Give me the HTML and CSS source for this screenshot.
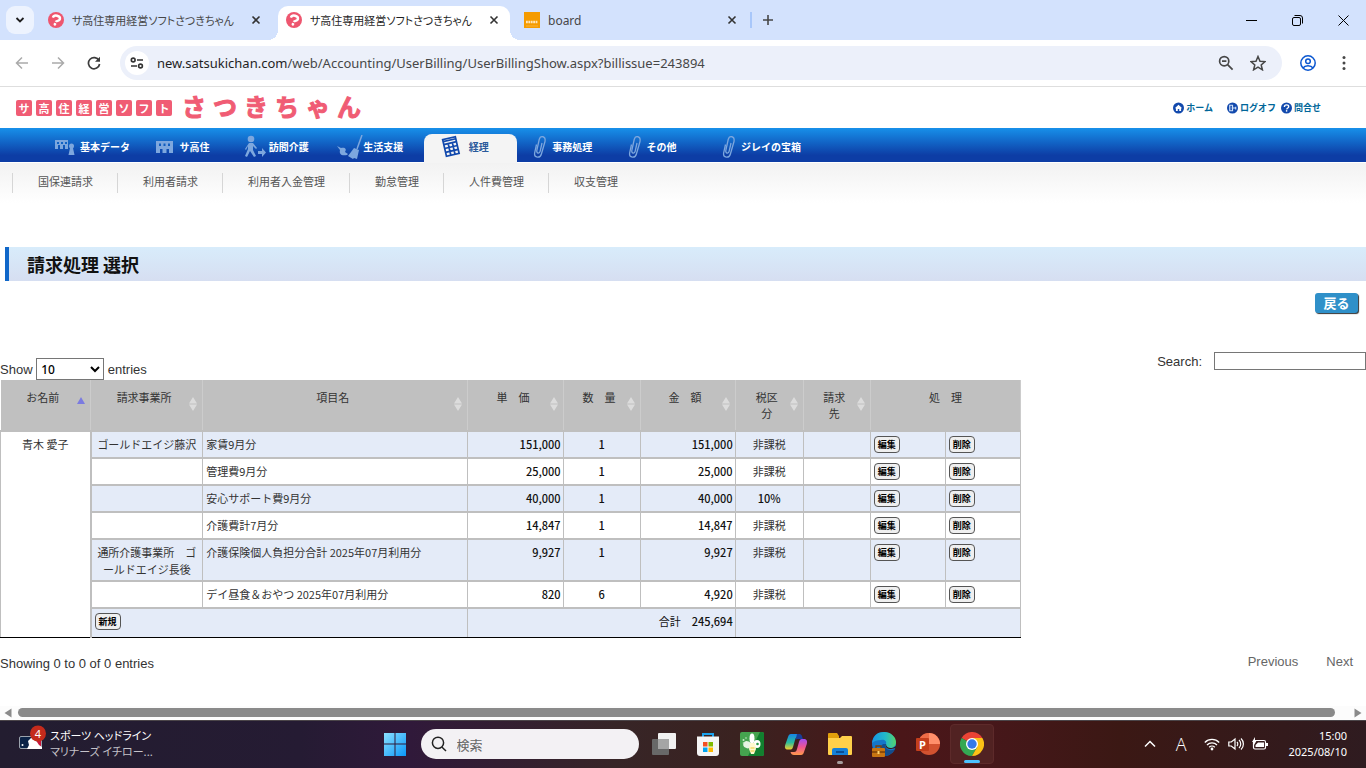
FILE: index.html
```html
<!DOCTYPE html>
<html lang="ja">
<head>
    <meta charset="UTF-8">
    <title>サ高住専用経営ソフトさつきちゃん</title>
    <link rel="stylesheet" href="styles.css">
</head>
<body>
<svg class="defs" aria-hidden="true">
    <symbol id="favicon" viewBox="0 0 16 16"><circle cx="8" cy="8" r="8" fill="#ee566f"/><g transform="rotate(14 8 8)"><path d="M4.400 6.400C4.600 4.400 6 3.600 8 3.600s3.600 1 3.600 2.700c0 2-3 2-3.400 3.600" fill="none" stroke="#fff" stroke-width="2.400"/><circle cx="8" cy="12.400" r="1.400" fill="#fff"/></g></symbol>
    <symbol id="close" viewBox="0 0 10 10"><path d="M1.500 1.500l7 7M8.500 1.500l-7 7" fill="none" stroke="currentColor" stroke-width="1.600"/></symbol>
    <symbol id="clip" viewBox="0 0 14 24"><path d="M3.500 9.500L1.600 18c-.6 5 5.600 5.600 6.800 1L12 6.500c1-5.500-4.600-6.500-5.800-2L3.800 15.500c-.4 3.200 2.800 3.400 3.400.6L9 8" fill="none" stroke="currentColor" stroke-width="1.300"/></symbol>
    <symbol id="sort" viewBox="0 0 8 14"><path d="M4 0l4 6.500H0zM4 14l4-6.500H0z" fill="#dcdcdc"/></symbol>
</svg>

<!-- タブ -->
<div class="tabstrip">
    <button class="tab-search" aria-label="タブを検索"><svg width="10" height="10" viewBox="0 0 10 10"><path d="M1.500 3L5 6.500 8.500 3" fill="none" stroke="#1f1f1f" stroke-width="1.800"/></svg></button>
    <div class="tab">
        <svg width="16" height="16"><use href="#favicon"/></svg>
        <span class="tab-title">サ高住専用経営ソフトさつきちゃん</span>
        <button class="tab-close" aria-label="閉じる"><svg width="10" height="10"><use href="#close"/></svg></button>
    </div>
    <div class="tab active">
        <svg width="16" height="16"><use href="#favicon"/></svg>
        <span class="tab-title">サ高住専用経営ソフトさつきちゃん</span>
        <button class="tab-close" aria-label="閉じる"><svg width="10" height="10"><use href="#close"/></svg></button>
    </div>
    <div class="tab">
        <svg width="16" height="16" viewBox="0 0 16 16"><path d="M0 0h16v16H0z" fill="#f59b00"/><path d="M2 10h12" stroke="#ffe6bd" stroke-width="2.400" stroke-dasharray="1.800 .6"/><path d="M2 14h12" stroke="#fbc76a" stroke-width=".6"/></svg>
        <span class="tab-title latin">board</span>
        <button class="tab-close" aria-label="閉じる"><svg width="10" height="10"><use href="#close"/></svg></button>
    </div>
    <button class="tab-new" aria-label="新しいタブ"><svg width="12" height="12" viewBox="0 0 12 12"><path d="M6 1v10M1 6h10" stroke="#474747" stroke-width="1.600"/></svg></button>
    <div class="win">
        <button aria-label="最小化"><svg width="11" height="11" viewBox="0 0 11 11"><path d="M0 5.500h11" stroke="#000"/></svg></button>
        <button aria-label="元に戻す"><svg width="11" height="11" viewBox="0 0 11 11"><rect x=".5" y="2.500" width="8" height="8" rx="1.500" fill="none" stroke="#000"/><path d="M2.500.5H8a2.500 2.500 0 0 1 2.500 2.500v5.500" fill="none" stroke="#000"/></svg></button>
        <button aria-label="閉じる"><svg width="11" height="11" viewBox="0 0 11 11"><path d="M.5.5l10 10M10.500.5l-10 10" stroke="#000"/></svg></button>
    </div>
</div>

<!-- アドレスバー -->
<div class="toolbar">
    <button aria-label="戻る"><svg width="14" height="14" viewBox="0 0 14 14"><path d="M13 7H2M7 1.500L1.500 7 7 12.500" fill="none" stroke="#aaa" stroke-width="1.500"/></svg></button>
    <button aria-label="進む"><svg width="14" height="14" viewBox="0 0 14 14"><path d="M1 7h11M7 1.500L12.500 7 7 12.500" fill="none" stroke="#aaa" stroke-width="1.500"/></svg></button>
    <button aria-label="再読み込み"><svg width="14" height="14" viewBox="0 0 14 14"><path d="M12 4.500A5.600 5.600 0 1 0 12.600 8" fill="none" stroke="#3c3c3c" stroke-width="1.700"/><path d="M13 .8v5H8z" fill="#3c3c3c"/></svg></button>
    <div class="omnibox">
        <span class="site-info"><svg width="14" height="12" viewBox="0 0 14 12"><g fill="none" stroke="#333" stroke-width="1.600"><circle cx="3.200" cy="3" r="1.900"/><path d="M7 3h6M1 9h6"/><circle cx="10.500" cy="9" r="1.900"/></g></svg></span>
        <span class="url">new.satsukichan.com<span>/web/Accounting/UserBilling/UserBillingShow.aspx?billissue=243894</span></span>
        <svg width="16" height="16" viewBox="0 0 16 16"><g fill="none" stroke="#474747" stroke-width="1.700"><circle cx="6.200" cy="6.200" r="4.600"/><path d="M9.600 9.600l5 5M4 6.200h4.400"/></g></svg>
        <svg width="16" height="16" viewBox="0 0 16 16"><path d="M8 1.500l2 4.700 5 .4-3.800 3.300 1.200 4.900L8 12.200l-4.400 2.600 1.200-4.900L1 6.600l5-.4z" fill="none" stroke="#474747" stroke-width="1.500"/></svg>
    </div>
    <button aria-label="プロフィール"><svg width="16" height="16" viewBox="0 0 16 16"><g fill="none" stroke="#0b57d0" stroke-width="1.500"><circle cx="8" cy="8" r="7.200"/><circle cx="8" cy="6.300" r="2.300"/><path d="M3 13c2-3 8-3 10 0"/></g></svg></button>
    <button aria-label="メニュー"><svg width="4" height="14" viewBox="0 0 4 14"><g fill="#474747"><circle cx="2" cy="1.600" r="1.500"/><circle cx="2" cy="7" r="1.500"/><circle cx="2" cy="12.400" r="1.500"/></g></svg></button>
</div>

<div class="page">
    <div class="header">
        <div class="logo">
            <div class="logo-sub"><span>サ</span><span>高</span><span>住</span><span>経</span><span>営</span><span>ソ</span><span>フ</span><span>ト</span></div>
            <div class="logo-name"><span>さ</span><span>つ</span><span>き</span><span>ち</span><span>ゃ</span><span>ん</span></div>
        </div>
        <div class="links">
            <a class="home" href="#"><svg width="11" height="12" viewBox="0 0 12 12"><circle cx="6" cy="6" r="6" fill="#1249ad"/><path d="M6 2.500L2 6.200h1.200v3h2V7.200h1.600v2h2v-3H10z" fill="#fff"/></svg>ホーム</a>
            <a href="#"><svg width="11" height="12" viewBox="0 0 12 12"><circle cx="6" cy="6" r="6" fill="#1249ad"/><path d="M3 3h3v6H3zM5 6h5M9.500 4.500v3" fill="none" stroke="#cfe0f7" stroke-width="1.300"/></svg>ログオフ</a>
            <a href="#"><svg width="11" height="12" viewBox="0 0 12 12"><circle cx="6" cy="6" r="6" fill="#1249ad"/><path d="M3.700 4.800C3.700 3.400 4.700 2.600 6 2.600s2.400.8 2.400 1.900c0 1.500-2 1.500-2.200 3" fill="none" stroke="#fff" stroke-width="1.500"/><circle cx="6.100" cy="9.200" r=".9" fill="#fff"/></svg>問合せ</a>
        </div>
    </div>

    <!-- メインメニュー -->
    <div class="nav">
        <a href="#"><svg class="icon" viewBox="0 0 26 24"><path d="M1 5h13v9h-3v-4H9v4H6v-4H4v4H1zM3 7v2h2V7zM7 7v2h2V7zM11 7v2h2V7z" fill-rule="evenodd"/><circle cx="17.500" cy="11" r="2.500"/><path d="M16 13h3l1.500 7h-6z"/></svg>基本データ</a>
        <a class="wide" href="#"><svg class="icon" viewBox="0 0 26 24"><path d="M3 6h17v12h-4v-4h-2.500v4h-4v-4H7v4H3zM6 8.500v2.500h2V8.500zM10.500 8.500v2.500h2V8.500zM15 8.500v2.500h2V8.500z" fill-rule="evenodd"/></svg>サ高住</a>
        <a href="#"><svg class="icon" viewBox="0 0 26 24"><circle cx="8" cy="4" r="3.300"/><path d="M6 8h4l4 5-1 1-3-3v4l3 6-2 1-4-6-3 6-2-1 3-7v-3l-2 4-1-1zM15 16h4v-3l4 4.500-4 4.500v-3h-4z"/></svg>訪問介護</a>
        <a href="#"><svg class="icon" viewBox="0 0 26 24"><path d="M25 0l-5 14" fill="none" stroke="currentColor" stroke-width="1.500"/><path d="M17 13l5 2-2 9-3-1-1 1-5-3zM0 11l4 2c4-1 6 1 4 4l3 2-1 1c-6 1-8-1-7-5z"/></svg>生活支援</a>
        <a class="on" href="#"><svg class="icon" viewBox="0 0 26 24"><g transform="rotate(-13 13 12)" fill="none" stroke="#1249ad" stroke-width="1.700"><rect x="6.500" y="3" width="13" height="17"/><path d="M6.500 5H19.500M6.500 8H19.500M6.500 12H19.500M6.500 16H19.500M11 8V20M15.300 8V20"/></g></svg>経理</a>
        <a href="#"><svg class="icon" viewBox="0 0 26 24"><use href="#clip" x="7" width="14" height="24"/></svg>事務処理</a>
        <a href="#"><svg class="icon" viewBox="0 0 26 24"><use href="#clip" x="7" width="14" height="24"/></svg>その他</a>
        <a href="#"><svg class="icon" viewBox="0 0 26 24"><use href="#clip" x="7" width="14" height="24"/></svg>ジレイの宝箱</a>
    </div>
    <div class="subnav">
        <a href="#">国保連請求</a>
        <a href="#">利用者請求</a>
        <a href="#">利用者入金管理</a>
        <a href="#">勤怠管理</a>
        <a href="#">人件費管理</a>
        <a href="#">収支管理</a>
    </div>

    <h1>請求処理 選択</h1>
    <div class="actions"><button class="back">戻る</button></div>

    <div class="table-top">
        <label class="length">Show
            <select><option>10</option><option>25</option><option>50</option></select>
            entries</label>
        <label class="filter">Search: <input type="text"></label>
    </div>

    <table>
        <colgroup><col class="c-name"><col class="c-office"><col class="c-item"><col class="c-price"><col class="c-qty"><col class="c-price"><col class="c-tax"><col class="c-dest"><col class="c-op"><col class="c-op"></colgroup>
        <thead>
        <tr>
            <th><div class="th"><span>お名前</span><svg viewBox="0 0 8 14"><path d="M4 0l4 7H0z" fill="#7b7be0"/></svg></div></th>
            <th><div class="th"><span>請求事業所</span><svg><use href="#sort"/></svg></div></th>
            <th><div class="th"><span>項目名</span><svg><use href="#sort"/></svg></div></th>
            <th><div class="th"><span>単　価</span><svg><use href="#sort"/></svg></div></th>
            <th><div class="th"><span>数　量</span><svg><use href="#sort"/></svg></div></th>
            <th><div class="th"><span>金　額</span><svg><use href="#sort"/></svg></div></th>
            <th><div class="th"><span>税区<br>分</span><svg><use href="#sort"/></svg></div></th>
            <th><div class="th"><span>請求<br>先</span><svg><use href="#sort"/></svg></div></th>
            <th colspan="2">処　理</th>
        </tr>
        </thead>
        <tbody>
        <tr>
            <td class="name" rowspan="7">青木 愛子</td>
            <td>ゴールドエイジ藤沢</td><td class="item">家賃9月分</td><td class="num">151,000</td><td class="qty">1</td><td class="num">151,000</td><td>非課税</td><td></td>
            <td class="op"><button>編集</button></td><td class="op"><button>削除</button></td>
        </tr>
        <tr>
            <td></td><td class="item">管理費9月分</td><td class="num">25,000</td><td class="qty">1</td><td class="num">25,000</td><td>非課税</td><td></td>
            <td class="op"><button>編集</button></td><td class="op"><button>削除</button></td>
        </tr>
        <tr>
            <td></td><td class="item">安心サポート費9月分</td><td class="num">40,000</td><td class="qty">1</td><td class="num">40,000</td><td class="qty">10%</td><td></td>
            <td class="op"><button>編集</button></td><td class="op"><button>削除</button></td>
        </tr>
        <tr>
            <td></td><td class="item">介護費計7月分</td><td class="num">14,847</td><td class="qty">1</td><td class="num">14,847</td><td>非課税</td><td></td>
            <td class="op"><button>編集</button></td><td class="op"><button>削除</button></td>
        </tr>
        <tr>
            <td>通所介護事業所　ゴールドエイジ長後</td><td class="item">介護保険個人負担分合計 2025年07月利用分</td><td class="num">9,927</td><td class="qty">1</td><td class="num">9,927</td><td>非課税</td><td></td>
            <td class="op"><button>編集</button></td><td class="op"><button>削除</button></td>
        </tr>
        <tr>
            <td></td><td class="item">デイ昼食＆おやつ 2025年07月利用分</td><td class="num">820</td><td class="qty">6</td><td class="num">4,920</td><td>非課税</td><td></td>
            <td class="op"><button>編集</button></td><td class="op"><button>削除</button></td>
        </tr>
        <tr class="total">
            <td class="op" colspan="2"><button>新規</button></td><td class="num" colspan="3"><span>合計</span>　245,694</td><td colspan="4"></td>
        </tr>
        </tbody>
    </table>

    <div class="table-bottom">
        <div class="info">Showing 0 to 0 of 0 entries</div>
        <div class="paginate"><a href="#">Previous</a><a href="#">Next</a></div>
    </div>
</div>

<div class="scrollbar">
    <svg width="8" height="10" viewBox="0 0 8 10"><path d="M7.500.5v9L.5 5z" fill="#8a8a8a"/></svg>
    <div class="thumb"></div>
    <svg width="8" height="10" viewBox="0 0 8 10"><path d="M.5.5v9l7-4.500z" fill="#8a8a8a"/></svg>
</div>

<!-- タスクバー -->
<div class="taskbar">
    <div class="widget">
        <svg width="28" height="30" viewBox="0 0 28 30"><rect x="1.500" y="12.500" width="22" height="12" rx="1.500" fill="#0b2347" stroke="#9ba3ad"/><path d="M19 13h4v11h-4z" fill="#c8173c"/><path d="M9 25l2-4-1-4 3-3 4 1 2 3 2 3 3 2v2z" fill="#fff"/><circle cx="4.500" cy="21" r="1" fill="#fff"/><circle cx="20" cy="9.500" r="8" fill="#c42b1c"/><text class="badge" x="20" y="13.500" text-anchor="middle">4</text></svg>
        <div class="news"><div>スポーツ ヘッドライン</div><div class="dim">マリナーズ イチロー...</div></div>
    </div>
    <div class="apps">
        <button aria-label="スタート"><svg width="24" height="24" viewBox="0 0 24 24"><defs><linearGradient id="win" x2="1" y2="1"><stop stop-color="#8be1ff"/><stop offset="1" stop-color="#0a96f8"/></linearGradient></defs><path d="M1 1h10.500v10.500H1zM12.500 1H23v10.500H12.500zM1 12.500h10.500V24H1zM12.500 12.500H23V24H12.500z" fill="url(#win)"/></svg></button>
        <label class="search"><svg width="16" height="16" viewBox="0 0 16 16"><g fill="none" stroke="#222" stroke-width="1.500"><circle cx="7" cy="6.800" r="5.600"/><path d="M10.800 11l4.200 4"/></g></svg><input type="text" placeholder="検索" aria-label="検索"></label>
        <button aria-label="タスクビュー"><svg width="24" height="24" viewBox="0 0 24 24"><rect x="0" y="7" width="17" height="16" rx="1" fill="#686868"/><rect x="6" y="1" width="18" height="16" rx="1" fill="#f1f1f1"/><path d="M6 7h11v10H6z" fill="#a5a5a5"/></svg></button>
        <button aria-label="ストア"><svg width="24" height="24" viewBox="0 0 24 24"><path d="M7 6V2h10v4" fill="none" stroke="#1ba3ee" stroke-width="2"/><path d="M1 4.500h22V21a3 3 0 0 1-3 3H4a3 3 0 0 1-3-3z" fill="#f5f5f5"/><path d="M7 10h4.500v4.500H7z" fill="#f25022"/><path d="M12.500 10H17v4.500h-4.500z" fill="#7fba00"/><path d="M7 15.500h4.500V20H7z" fill="#00a4ef"/><path d="M12.500 15.500H17V20h-4.500z" fill="#ffb900"/></svg></button>
        <button aria-label="メモ"><svg width="24" height="24" viewBox="0 0 24 24"><rect width="24" height="24" rx="2" fill="#45a34f"/><path d="M20 0h2a2 2 0 0 1 2 2v20a2 2 0 0 1-2 2H8z" fill="#12802f"/><ellipse cx="12" cy="6.500" rx="2.500" ry="5" fill="#fff"/><ellipse cx="7.500" cy="12.500" rx="4" ry="3.500" transform="rotate(25 7 12)" fill="#e6f4e4"/><ellipse cx="17" cy="12" rx="3.500" ry="4" fill="#fff"/><path d="M10 11h5l1 6-2 5h-3l-2-5z" fill="#fff8cf"/><path d="M10.500 16h4M10.500 19h4" stroke="#e8c832" stroke-width="1.200"/><circle cx="17.500" cy="12" r="1.300" fill="#2e9b45"/><g fill="#c8e8c8"><circle cx="3.500" cy="8" r="1"/><circle cx="6" cy="6" r=".8"/><circle cx="3.500" cy="11" r=".8"/></g></svg></button>
        <button aria-label="Copilot"><svg width="24" height="24" viewBox="0 0 24 24"><defs><linearGradient id="cpa" x2="0" y2="1"><stop stop-color="#1584e8"/><stop offset=".55" stop-color="#2bbd9b"/><stop offset="1" stop-color="#f5cf2c"/></linearGradient><linearGradient id="cpb" x2="0" y2="1"><stop stop-color="#a34cf0"/><stop offset=".5" stop-color="#ef5592"/><stop offset="1" stop-color="#ff9a4b"/></linearGradient></defs><path d="M7 2h7c2 0 3 1 3.500 3H14c-2 0-2.500 1-3 3l-2 7c-.5 2-1.500 2.500-3 2.500H4c-3 0-3.500-2-2.800-4.500L4 5c.5-2 1.500-3 3-3z" fill="url(#cpa)"/><path d="M13 2h2c2 0 3 1 3.500 4l.5 1h-5c-1 0-2 0-2.500 1z" fill="#173d9b"/><path d="M17 23h-7c-2 0-3-1-3.500-3H10c2 0 2.500-1 3-3l2-7c.5-2 1.500-3 3-3h2c3 0 3.500 2.500 2.800 5L20 20c-.5 2-1.500 3-3 3z" fill="url(#cpb)"/></svg></button>
        <button class="running" aria-label="エクスプローラー"><svg width="26" height="24" viewBox="0 0 26 24"><path d="M1 2a1 1 0 0 1 1-1h8l2 3v4H1z" fill="#e2a00c"/><path d="M1 6h12l2-2h9a1 1 0 0 1 1 1v17a1 1 0 0 1-1 1H2a1 1 0 0 1-1-1z" fill="#ffd04a"/><path d="M5 23v-5a2 2 0 0 1 2-2h12a2 2 0 0 1 2 2v5z" fill="#1580d8"/><path d="M9 20h8" stroke="#0a4d94" stroke-width="2"/></svg></button>
        <button aria-label="Edge"><svg width="26" height="26" viewBox="0 0 26 26"><defs><linearGradient id="edge" x2="1"><stop stop-color="#1795e5"/><stop offset=".55" stop-color="#22b9c9"/><stop offset="1" stop-color="#55d46b"/></linearGradient></defs><circle cx="13" cy="13" r="12" fill="#1476c9"/><path d="M1 12C2 4 7 1 13 1c7 0 12 5 12 10 0 4-3 6-6 6-4 0-5-2-4-4 1-3-2-5-5-4-4 0-7 1-9 3z" fill="url(#edge)"/><path d="M15 13c-2 5 4 8 9 5-2 4-6 7-10 7-5-2-6-9-2-12z" fill="#134c8c"/><path d="M15 13c-1 3 1 5 5 5l5-1v-2c-3 3-10 3-10-2z" fill="#361b1b"/><rect x="1" y="17" width="13" height="9" rx="1" fill="#c77412"/><path d="M5 17v-2h5v2M1 21h13" fill="none" stroke="#7b3f08" stroke-width="1.300"/><path d="M6.500 20h2v3h-2z" fill="#ffd36d"/></svg></button>
        <button aria-label="PowerPoint"><svg width="26" height="24" viewBox="0 0 26 24"><circle cx="14" cy="12" r="11" fill="#d35230"/><path d="M14 1a11 11 0 0 1 11 11H14z" fill="#ff8f6b"/><path d="M14 1v11H3A11 11 0 0 1 14 1z" fill="#ed6c47"/><rect x="1" y="6" width="13" height="13" rx="1" fill="#c43e1c"/><text class="ppt" x="7.500" y="16.500" text-anchor="middle">P</text></svg></button>
        <button class="current" aria-label="Chrome"><svg width="24" height="24" viewBox="0 0 24 24"><path d="M12 12L1.600 6A12 12 0 0 1 22.400 6z" fill="#ea4335"/><path d="M12 12L1.600 6A12 12 0 0 0 12 24l5.200-9z" fill="#34a853"/><path d="M12 12l5.200 3L12 24A12 12 0 0 0 22.400 6H12z" fill="#fbc116"/><circle cx="12" cy="12" r="6" fill="#fff"/><circle cx="12" cy="12" r="4.700" fill="#3478e8"/></svg></button>
    </div>
    <div class="tray">
        <svg width="12" height="8" viewBox="0 0 12 8"><path d="M1 6.500l5-5 5 5" fill="none" stroke="#fff" stroke-width="1.500"/></svg>
        <span class="ime">A</span>
        <div class="status">
            <svg width="16" height="14" viewBox="0 0 16 14"><g fill="none" stroke="#fff" stroke-width="1.300"><path d="M.8 5.500a10 10 0 0 1 14.400 0M3 8a7 7 0 0 1 10 0M5.200 10.300a4 4 0 0 1 5.600 0"/></g><circle cx="8" cy="12" r="1.400" fill="#fff"/></svg>
            <svg width="16" height="14" viewBox="0 0 16 14"><g fill="none" stroke="#fff" stroke-width="1.200"><path d="M.8 5v4h2.500L7 12V2L3.300 5zM9 5c1 1 1 3 0 4M11 3c2.300 2 2.300 6 0 8M13 1.500c3.200 3 3.200 8 0 11"/></g></svg>
            <svg width="16" height="14" viewBox="0 0 16 14"><rect x="1.500" y="3.500" width="12" height="8.500" rx="1.500" fill="none" stroke="#fff" stroke-width="1.200"/><path d="M6 5.500h6v4.500H3.500V8zM14 6h2v3h-2zM3 0L0 5h2v3l3-5H3z" fill="#fff"/></svg>
        </div>
        <div class="clock"><div>15:00</div><div>2025/08/10</div></div>
    </div>
</div>
</body>
</html>
```

FILE: styles.css
```css
* {
    margin: 0;
    padding: 0;
    box-sizing: border-box;
}

body {
    display: flex;
    flex-direction: column;
    height: 100vh;
    overflow: hidden;
    background: #fff;
    color: #333;
    font-family: "Noto Sans CJK JP", sans-serif;
    font-size: 11px;
}

a {
    color: inherit;
    text-decoration: none;
}

button {
    border: 0;
    background: none;
    font-family: inherit;
    cursor: pointer;
}

svg {
    flex: none;
    display: block;
}

.defs {
    position: absolute;
    width: 0;
    height: 0;
}

/* タブ */
.tabstrip {
    display: flex;
    flex: none;
    height: 40px;
    padding: 6px 0 0 6px;
    background: #d3e2fd;
}

.tab-search {
    display: grid;
    place-items: center;
    width: 28px;
    height: 28px;
    margin-right: 6px;
    border-radius: 9px;
    background: #edf3fe;
}

.tab {
    position: relative;
    display: flex;
    align-items: center;
    gap: 8px;
    width: 232px;
    height: 34px;
    margin-right: 6px;
    padding: 0 11px 6px 8px;
    color: #474747;
}

.tab.active {
    border-radius: 10px 10px 0 0;
    background: #fff;
    color: #1f1f1f;
}

.tab.active:before, .tab.active:after {
    content: "";
    position: absolute;
    bottom: 0;
    width: 10px;
    height: 10px;
    background: radial-gradient(circle at 0 0, #d3e2fd 10px, #fff 10px);
}

.tab.active:before {
    left: -10px;
}

.tab.active:after {
    right: -10px;
    background: radial-gradient(circle at 100% 0, #d3e2fd 10px, #fff 10px);
}

.tab-title {
    flex: 1;
    overflow: hidden;
    white-space: nowrap;
    font-size: 11px;
    font-feature-settings: "palt";
}

.latin {
    font-family: "Noto Sans", sans-serif;
    font-size: 12px;
}

.tab-close {
    color: #333;
}

.tab-new {
    display: flex;
    align-items: center;
    height: 16px;
    margin: 6px 0 0 -4px;
    padding-left: 10px;
    border-left: 2px solid #a8c7fa;
}

.win {
    display: flex;
    margin-left: auto;
}

.win button {
    display: grid;
    place-items: center;
    width: 46px;
    height: 28px;
}

/* アドレスバー */
.toolbar {
    display: flex;
    flex: none;
    align-items: center;
    height: 47px;
    padding: 0 4px;
    border-bottom: 1px solid #dedede;
}

.toolbar button {
    display: grid;
    place-items: center;
    width: 36px;
    height: 34px;
}

.omnibox {
    display: flex;
    flex: 1;
    align-items: center;
    gap: 16px;
    height: 34px;
    margin: 0 8px;
    padding: 0 16px 0 5px;
    border-radius: 17px;
    background: #ecf0fa;
}

.site-info {
    display: grid;
    place-items: center;
    width: 24px;
    height: 24px;
    border-radius: 12px;
    background: #fff;
}

.url {
    flex: 1;
    margin-left: -8px;
    color: #1f1f1f;
    font-family: "Noto Sans", sans-serif;
    font-size: 13px;
}

.url span {
    color: #474747;
}

/* ページ */
.page {
    flex: 1;
    overflow: hidden;
}

.header {
    display: flex;
    justify-content: space-between;
    height: 41px;
    padding: 0 45px 0 16px;
}

.logo {
    display: flex;
    align-items: center;
    gap: 10px;
    color: #f05c74;
    font-weight: bold;
}

.logo-sub {
    display: flex;
    gap: 4px;
}

.logo-sub span {
    width: 16px;
    height: 16px;
    border-radius: 2px;
    background: #f05c74;
    color: #fff;
    font-size: 11px;
    line-height: 16px;
    text-align: center;
}

.logo-name {
    display: flex;
    gap: 7px;
    margin-bottom: 4px;
    font-size: 24px;
    line-height: 32px;
    -webkit-text-stroke: 1px #f05c74;
}

.links {
    display: flex;
    align-items: center;
    gap: 5px;
    color: #006699;
    font-size: 9px;
    font-weight: bold;
}

.links a {
    display: flex;
    align-items: center;
    gap: 2px;
}

.links .home {
    margin-right: 9px;
}

/* メインメニュー */
.nav {
    display: grid;
    grid-template-columns: repeat(8, 1fr);
    height: 34px;
    padding: 0 calc(100% - 802px) 0 46px;
    background: linear-gradient(#1790ea, #0d3da5 80%);
    color: #fff;
    font-size: 10px;
    font-weight: bold;
}

.nav a {
    display: flex;
    align-items: center;
    height: 29px;
    margin: 6px 1px 0 0;
    padding: 0 0 4px 8px;
    white-space: nowrap;
}

.nav .wide {
    padding-left: 13px;
}

.icon {
    width: 26px;
    height: 24px;
    color: #7da7de;
    fill: currentColor;
}

.nav .on {
    gap: 5px;
    padding-left: 14px;
    border-radius: 8px 8px 0 0;
    background: #f4f4f4;
    color: #2b5a9c;
}

.subnav {
    display: flex;
    height: 40px;
    margin-top: 1px;
    padding: 10px 12px;
    background: linear-gradient(#f2f2f2, #fff);
    color: #555;
}

.subnav a {
    height: 20px;
    padding: 0 24px 0 25px;
    border-left: 1px solid #d6d6d6;
    line-height: 17px;
}

h1 {
    height: 34px;
    margin: 44px 0 0 5px;
    padding-left: 18px;
    border-left: 4px solid #1067c9;
    background: linear-gradient(#d8ecfb, #d6def1);
    color: #111;
    font-size: 18px;
    line-height: 34px;
}

.actions {
    padding: 12px 8px 0;
    text-align: right;
}

.back {
    display: block;
    width: 43px;
    height: 20px;
    margin-left: auto;
    border-radius: 3px;
    background: #2f90c9;
    box-shadow: 1px 1px 1px #333;
    color: #fff;
    font-size: 13px;
    font-weight: bold;
    line-height: 18px;
}

.table-top {
    display: flex;
    align-items: flex-end;
    justify-content: space-between;
    margin-top: 39px;
    font-family: "Liberation Sans", sans-serif;
    font-size: 13px;
}

.length select {
    width: 68px;
    height: 22px;
    border: 1px solid #767676;
    background: #fff;
    color: #000;
    font-family: "Noto Sans", sans-serif;
    font-size: 12px;
    font-weight: 500;
}

.filter {
    display: flex;
    align-items: center;
    gap: 12px;
    margin-bottom: 10px;
}

.filter input {
    width: 152px;
    height: 18px;
    border: 1px solid #767676;
}

/* 明細 */
table {
    width: 1021px;
    table-layout: fixed;
    border-collapse: collapse;
    line-height: 17px;
}

.c-name { width: 90px; }
.c-office { width: 112px; }
.c-item { width: 265px; }
.c-price { width: 95px; }
.c-qty { width: 77px; }
.c-tax { width: 68px; }
.c-dest { width: 67px; }
.c-op { width: 75px; }

th {
    height: 51px;
    padding-top: 9px;
    border: 1px solid #ccc;
    border-top: 0;
    border-left: 0;
    background: #c0c0c0;
    font-weight: normal;
    line-height: 16px;
    vertical-align: top;
}

.th {
    display: flex;
    padding: 0 5px 0 8px;
}

.th span {
    flex: 1;
    white-space: nowrap;
}

.th svg {
    width: 8px;
    height: 14px;
    margin-top: 8px;
}

td {
    height: 27px;
    padding: 4px 2px 2px;
    border: 1px solid #bfbfbf;
    border-width: 2px 1px;
    text-align: center;
    vertical-align: top;
}

tr:nth-child(odd) td {
    background: #e4ebf8;
}

tr .name.name {
    border-right-width: 2px;
    border-bottom: 1px solid #000;
    background: #fff;
}

.item {
    padding-left: 3px;
    text-align: left;
}

.num {
    color: #111;
    font-weight: 500;
    text-align: right;
}

.num span {
    font-weight: normal;
}

.qty {
    color: #111;
    font-weight: 500;
}

.op {
    padding-left: 3px;
    text-align: left;
}

.op button {
    display: block;
    width: 26px;
    height: 17px;
    border: 1px solid #555;
    border-radius: 4px;
    background: #efefef;
    color: #000;
    font-size: 9px;
    font-weight: bold;
    line-height: 14px;
}

.total td {
    height: 29px;
    border-bottom: 1px solid #000;
}

.table-bottom {
    display: flex;
    justify-content: space-between;
    padding: 15px 13px 0 0;
    font-family: "Liberation Sans", sans-serif;
    font-size: 13px;
    line-height: 20px;
}

.info {
    padding-top: 1px;
}

.paginate {
    display: flex;
    gap: 28px;
    margin-top: -1px;
    color: #666;
}

.scrollbar {
    display: flex;
    flex: none;
    align-items: center;
    gap: 6px;
    height: 14px;
    padding: 0 4px 1px;
    background: #fcfcfc;
}

.thumb {
    flex: 1;
    height: 9px;
    margin-right: 13px;
    border-radius: 5px;
    background: #8a8a8a;
}

/* タスクバー */
.taskbar {
    display: grid;
    flex: none;
    grid-template-columns: 1fr auto 1fr;
    align-items: center;
    height: 48px;
    box-shadow: inset 0 1px #4b4549;
    background: linear-gradient(90deg, #231d30, #251b33 22%, #30193a 30%, #372527 45%, #3a2220 54%, #4a1618 66%, #47171a 72%, #3b1814 82%, #2f1b20);
    color: #fff;
}

.widget {
    display: flex;
    align-items: center;
    gap: 4px;
    padding-left: 18px;
}

.widget svg {
    margin-bottom: 10px;
}

.badge {
    fill: #fff;
    font-family: "Noto Sans", sans-serif;
    font-size: 11px;
}

.news {
    margin-bottom: 2px;
    font-size: 11px;
    font-feature-settings: "palt";
    line-height: 16px;
}

.dim {
    color: #c5c2c9;
}

.apps {
    display: flex;
    align-items: center;
}

.apps button {
    position: relative;
    display: grid;
    place-items: center;
    width: 44px;
    height: 40px;
}

.search {
    display: flex;
    align-items: center;
    gap: 10px;
    width: 218px;
    height: 30px;
    margin: 0 3px 0 4px;
    padding: 0 10px;
    border-radius: 15px;
    background: #f3f1f4;
}

.search input {
    width: 100%;
    border: 0;
    outline: 0;
    background: none;
    font-family: inherit;
    font-size: 13px;
}

.search input::placeholder {
    color: #666;
}

.apps .current {
    border: 1px solid #5d2a2a;
    border-radius: 4px;
    background: #512222;
}

.running:after, .current:after {
    content: "";
    position: absolute;
    bottom: 0;
    left: 50%;
    width: 6px;
    height: 3px;
    margin-left: -3px;
    border-radius: 2px;
    background: #a59c9c;
}

.current:after {
    width: 16px;
    margin-left: -8px;
    background: #4cc2ff;
}

.ppt {
    fill: #fff;
    font-family: "Open Sans", sans-serif;
    font-size: 11px;
    font-weight: bold;
}

.tray {
    display: flex;
    align-items: center;
    justify-content: flex-end;
    padding-right: 19px;
    font-family: "Noto Sans", sans-serif;
}

.ime {
    margin: 0 18px 0 20px;
    font-family: "Open Sans", sans-serif;
    font-size: 18px;
    font-weight: 300;
}

.status {
    display: flex;
    gap: 8px;
    margin-right: 20px;
}

.clock {
    font-size: 11px;
    line-height: 16px;
    text-align: right;
}
```
